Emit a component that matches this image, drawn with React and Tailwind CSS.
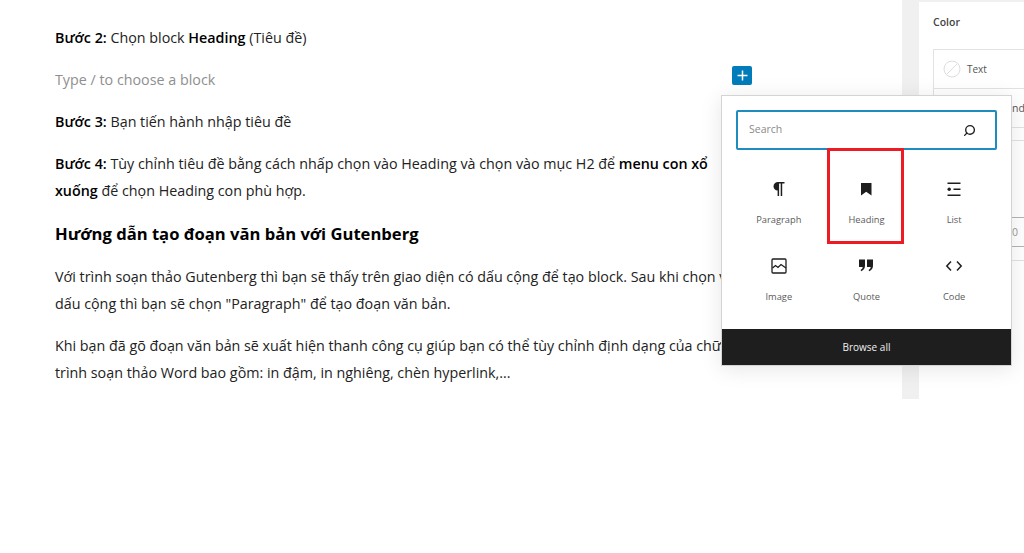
import { Search } from "lucide-react"

const BLOCKS = [
  {
    label: "Paragraph",
    icon: (
      <svg width="16" height="16" viewBox="0 0 16 16" fill="currentColor">
        <path d="M13.5 1H7C4.6 1 2.5 2.7 2.5 5.2S4.3 9.4 6.6 9.5V15h1.5V2.5h1.6V15h1.5V2.5h2.3V1z" />
      </svg>
    ),
  },
  {
    label: "Heading",
    icon: (
      <svg width="16" height="16" viewBox="0 0 16 16" fill="currentColor">
        <path d="M3 2h10.5v12.5L8.2 10.8 3 14.5V2z" />
      </svg>
    ),
  },
  {
    label: "List",
    icon: (
      <svg width="16" height="16" viewBox="0 0 16 16" fill="currentColor">
        <path d="M1.5 1.5h13V3h-13zM1.5 13.5h13V15h-13zM7.5 7.5h7V9h-7z" />
        <circle cx="3.2" cy="8.2" r="1.7" />
      </svg>
    ),
  },
  {
    label: "Image",
    icon: (
      <svg width="16" height="16" viewBox="0 0 16 16" fill="none" stroke="currentColor" strokeWidth="1.3">
        <rect x="1" y="1" width="14" height="14" rx="1" />
        <path d="M1.5 10l3-2.5 2.5 2 3-3 5 3.5" />
      </svg>
    ),
  },
  {
    label: "Quote",
    icon: (
      <svg width="16" height="16" viewBox="0 0 16 16" fill="currentColor">
        <path d="M1 1.5h6v6c0 2.7-1.3 4.7-3.8 5.7l-.6-1.3c1.3-.7 2-1.6 2.1-2.9H1V1.5zM9 1.5h6v6c0 2.7-1.3 4.7-3.8 5.7l-.6-1.3c1.3-.7 2-1.6 2.1-2.9H9V1.5z" />
      </svg>
    ),
  },
  {
    label: "Code",
    icon: (
      <svg width="18" height="16" viewBox="0 0 18 16" fill="none" stroke="currentColor" strokeWidth="1.5">
        <path d="M6 3.5L1.8 8 6 12.5M12 3.5L16.2 8 12 12.5" />
      </svg>
    ),
  },
]

function Inserter() {
  return (
    <div className="absolute left-[721px] top-[95px] w-[291px] border border-[#d4d4d4] bg-white shadow-[0_3px_20px_rgba(0,0,0,0.1)]">
      <div className="px-[14px] pt-[14px]">
        <div className="flex h-[40px] items-center justify-between rounded-[2px] border-2 border-[#1e8cbe] pl-[11px] pr-[19px] text-[10.5px] text-[#8a8a8a]">
          <span>Search</span>
          <Search size={13} strokeWidth={2.5} className="-scale-x-100 text-[#1e1e1e]" />
        </div>
      </div>
      <div className="grid grid-cols-3 px-[13px] pb-[17px] pt-[8px]">
        {BLOCKS.map((block) => (
          <div key={block.label} className="flex h-[77px] flex-col items-center pt-[19px]">
            <div className="flex h-[24px] items-center text-[#1e1e1e]">{block.icon}</div>
            <div className="mt-[12px] text-[9.3px] leading-[14px] text-[#5a5a5a]">{block.label}</div>
          </div>
        ))}
      </div>
      <div className="flex h-[36px] items-center justify-center bg-[#1e1e1e] text-[10px] font-medium text-[#f0f0f0]">
        Browse all
      </div>
      {/* red highlight drawn on the screenshot */}
      <div className="absolute left-[105px] top-[52px] h-[96px] w-[77px] border-[3px] border-[#ed1c24]" />
    </div>
  )
}

function Sidebar() {
  return (
    <div className="h-[399px] w-[122px] shrink-0 overflow-hidden border-l-[17px] border-t-2 border-[#f0f0f0] bg-white pl-[14px]">
      <div className="pt-[13px] text-[10.5px] font-semibold leading-[14px] text-[#444]">Color</div>
      <div className="mt-[20px] border border-r-0 border-[#e2e2e2]">
        <div className="flex h-[39px] items-center gap-[6px] border-b border-[#e2e2e2] pl-[9px] text-[10px] text-[#555]">
          <svg width="18" height="18" viewBox="0 0 18 18" fill="none" stroke="#ddd">
            <circle cx="9" cy="9" r="8" />
            <path d="M3.5 14.5L14.5 3.5" />
          </svg>
          Text
        </div>
        <div className="flex h-[38px] items-center pl-[78px] pt-[2px] text-[10.5px] text-[#555]">nd</div>
      </div>
      <div className="mt-[12px] h-[78px] border-y border-t-[#e2e2e2] border-b-[#b4b4b4]" />
      <div className="h-[29px] border-b border-[#b4b4b4] pl-[79px] pt-[6px] text-[10.5px] leading-[16px] text-[#999]">0</div>
      <div className="mt-[13px] border-b border-[#e2e2e2]" />
    </div>
  )
}

export default function App() {
  return (
    <div className="relative flex h-[553px] w-[1024px] overflow-hidden bg-white font-['Open_Sans',sans-serif] text-[#1e1e1e]">
      <div className="w-[902px] shrink-0 overflow-hidden pl-[55px] pt-[24px] text-[14.3px] leading-[27px] text-[#222]">
        <p className="w-[680px]">
          <strong className="font-semibold text-black">Bước 2:</strong> Chọn block{" "}
          <strong className="font-semibold text-black">Heading</strong> (Tiêu đề)
        </p>
        <p className="mt-[15px] text-[#8f8f8f]">Type / to choose a block</p>
        <p className="mt-[15px]">
          <strong className="font-semibold text-black">Bước 3:</strong> Bạn tiến hành nhập tiêu đề
        </p>
        <p className="mt-[15px] w-[680px]">
          <strong className="font-semibold text-black">Bước 4:</strong> Tùy chỉnh tiêu đề bằng cách nhấp chọn vào Heading và chọn vào mục H2 để{" "}
          <strong className="font-semibold text-black">menu con xổ xuống</strong> để chọn Heading con phù hợp.
        </p>
        <h2 className="mt-[16px] text-[16.6px] font-bold leading-[27px] text-black">
          Hướng dẫn tạo đoạn văn bản với Gutenberg
        </h2>
        <p className="mt-[16px] w-[700px]">
          Với trình soạn thảo Gutenberg thì bạn sẽ thấy trên giao diện có dấu cộng để tạo block. Sau khi chọn vào dấu cộng thì bạn sẽ chọn "Paragraph" để tạo đoạn văn bản.
        </p>
        <p className="mt-[15px] w-[700px]">
          Khi bạn đã gõ đoạn văn bản sẽ xuất hiện thanh công cụ giúp bạn có thể tùy chỉnh định dạng của chữ như trình soạn thảo Word bao gồm: in đậm, in nghiêng, chèn hyperlink,...
        </p>
      </div>
      <Sidebar />

      <div className="absolute left-[732px] top-[66px] flex h-[19px] w-[20px] items-center justify-center rounded-[2px] bg-[#007cba] text-white">
        <svg width="13" height="13" viewBox="0 0 13 13" fill="currentColor">
          <path d="M5.75 1.5h1.5v4.25h4.25v1.5H7.25v4.25h-1.5V7.25H1.5v-1.5h4.25z" />
        </svg>
      </div>
      <Inserter />
    </div>
  )
}
